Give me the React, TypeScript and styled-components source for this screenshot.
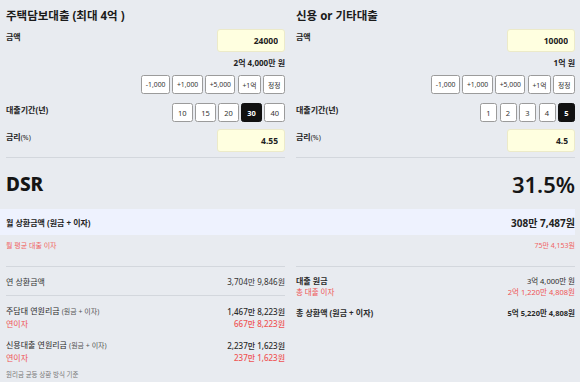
import React, { useState } from "react";
import styled, { createGlobalStyle } from "styled-components";

const Global = createGlobalStyle`
  html, body { margin: 0; padding: 0; background: #e8ebf0; }
  body { font-family: "Noto Sans", "Noto Sans CJK KR", sans-serif; color: #222; }
  * { box-sizing: border-box; }
`;

const Page = styled.div`
  width: 580px;
  height: 382px;
  overflow: hidden;
  padding: 0 5px 0 6px;
`;

const TwoCols = styled.div`
  display: grid;
  grid-template-columns: 1fr 1fr;
  column-gap: 11px;
`;

const Column = styled.section`
  display: flex;
  flex-direction: column;
  border-bottom: 1px solid #d3d7dd;
  padding-bottom: 5px;
`;

const Title = styled.h2`
  margin: 9px 0 0;
  font-size: 11.5px;
  line-height: 14px;
  font-weight: 700;
  color: #1a1a1a;
`;

const FieldRow = styled.div<{ $mt: number }>`
  display: flex;
  justify-content: space-between;
  align-items: flex-start;
  margin-top: ${(p) => p.$mt}px;
`;

const Label = styled.span<{ $pt?: number }>`
  font-size: 8px;
  line-height: 12px;
  font-weight: 700;
  padding-top: ${(p) => p.$pt ?? 2}px;
  color: #222;
  small { font-size: 7px; font-weight: 400; }
`;

const NumInput = styled.input`
  width: 68px;
  height: 23px;
  border: 1px solid #eceac9;
  border-radius: 3px;
  background: #ffffe0;
  text-align: right;
  padding: 0 6px 0 0;
  font-family: "Noto Sans", "Noto Sans CJK KR", sans-serif;
  font-size: 8.5px;
  font-weight: 700;
  color: #222;
  outline: none;
`;

const AmountText = styled.div`
  margin-top: 5px;
  text-align: right;
  font-size: 8px;
  line-height: 12px;
  font-weight: 700;
`;

const ButtonRow = styled.div<{ $mt?: number }>`
  display: flex;
  justify-content: flex-end;
  gap: 2.5px;
  margin-top: ${(p) => p.$mt ?? 0}px;
`;

const QuickBtn = styled.button`
  height: 19px;
  padding: 0 3.5px;
  background: #fff;
  border: 1px solid #9b9b9b;
  border-radius: 2.5px;
  font-family: "Noto Sans", "Noto Sans CJK KR", sans-serif;
  font-size: 6.8px;
  color: #333;
  cursor: pointer;
`;

const PeriodBtn = styled.button<{ $active: boolean }>`
  height: 19px;
  min-width: 17px;
  padding: 0 5px;
  background: ${(p) => (p.$active ? "#111" : "#fff")};
  color: ${(p) => (p.$active ? "#fff" : "#333")};
  border: 1px solid ${(p) => (p.$active ? "#111" : "#9b9b9b")};
  border-radius: 2.5px;
  font-family: "Noto Sans", "Noto Sans CJK KR", sans-serif;
  font-size: 7.5px;
  font-weight: ${(p) => (p.$active ? 700 : 400)};
  cursor: pointer;
`;

const DsrHeader = styled.div`
  height: 51px;
  display: flex;
  justify-content: space-between;
  align-items: center;
`;

const DsrLabel = styled.div`
  font-size: 19px;
  font-weight: 800;
  color: #151515;
`;

const DsrValue = styled.div`
  font-size: 22px;
  font-weight: 600;
  color: #151515;
`;

const Band = styled.div`
  height: 26px;
  margin-left: -6px;
  padding-left: 6px;
  background: #eef2fe;
  display: flex;
  justify-content: space-between;
  align-items: center;
`;

const BandLabel = styled.span`
  font-size: 8px;
  font-weight: 700;
`;

const BandValue = styled.span`
  font-size: 10px;
  font-weight: 700;
`;

const InterestRow = styled.div`
  height: 20px;
  display: flex;
  justify-content: space-between;
  align-items: center;
  color: #f06464;
  font-size: 7px;
  margin-bottom: 11px;
`;

const BottomCol = styled.div`
  border-top: 1px solid #d3d7dd;
  display: flex;
  flex-direction: column;
`;

const SummaryRow = styled.div`
  height: 29px;
  display: flex;
  justify-content: space-between;
  align-items: center;
  border-bottom: 1px solid #d3d7dd;
  font-size: 8px;
  color: #333;
`;

const Group = styled.div<{ $mt: number }>`
  margin-top: ${(p) => p.$mt}px;
  display: flex;
  flex-direction: column;
`;

const Line = styled.div<{ $tone?: "red"; $lh?: number; $size?: number; $bold?: boolean }>`
  display: flex;
  justify-content: space-between;
  align-items: center;
  line-height: ${(p) => p.$lh ?? 12}px;
  font-size: ${(p) => p.$size ?? 8}px;
  font-weight: ${(p) => (p.$bold ? 700 : 400)};
  color: ${(p) => (p.$tone === "red" ? "#ef5454" : "#2a2a2a")};
  small { font-size: 7px; color: #555; font-weight: 400; }
`;

const Value = styled.span<{ $size?: number; $weight?: number }>`
  font-size: ${(p) => p.$size ?? 8}px;
  font-weight: ${(p) => p.$weight ?? 500};
`;

const Footnote = styled.div`
  margin-top: 7px;
  font-size: 6.5px;
  line-height: 10px;
  color: #777;
`;

const quick = ["-1,000", "+1,000", "+5,000", "+1억", "정정"];

type LoanProps = {
  title: string;
  amount: string;
  amountText: string;
  periods: number[];
  active: number;
  rate: string;
};

function LoanColumn({ title, amount, amountText, periods, active, rate }: LoanProps) {
  const [sel, setSel] = useState(active);
  return (
    <Column>
      <Title>{title}</Title>
      <FieldRow $mt={6}>
        <Label>금액</Label>
        <NumInput defaultValue={amount} />
      </FieldRow>
      <AmountText>{amountText}</AmountText>
      <ButtonRow $mt={6}>
        {quick.map((q) => (
          <QuickBtn key={q}>{q}</QuickBtn>
        ))}
      </ButtonRow>
      <FieldRow $mt={9}>
        <Label $pt={1}>대출기간(년)</Label>
        <ButtonRow>
          {periods.map((p) => (
            <PeriodBtn key={p} $active={p === sel} onClick={() => setSel(p)}>
              {p}
            </PeriodBtn>
          ))}
        </ButtonRow>
      </FieldRow>
      <FieldRow $mt={7}>
        <Label>
          금리<small>(%)</small>
        </Label>
        <NumInput defaultValue={rate} />
      </FieldRow>
    </Column>
  );
}

export default function App() {
  return (
    <>
      <Global />
      <Page>
        <TwoCols>
          <LoanColumn
            title="주택담보대출 (최대 4억 )"
            amount="24000"
            amountText="2억 4,000만 원"
            periods={[10, 15, 20, 30, 40]}
            active={30}
            rate="4.55"
          />
          <LoanColumn
            title="신용 or 기타대출"
            amount="10000"
            amountText="1억 원"
            periods={[1, 2, 3, 4, 5]}
            active={5}
            rate="4.5"
          />
        </TwoCols>
        <DsrHeader>
          <DsrLabel>DSR</DsrLabel>
          <DsrValue>31.5%</DsrValue>
        </DsrHeader>
        <Band>
          <BandLabel>월 상환금액 (원금 + 이자)</BandLabel>
          <BandValue>308만 7,487원</BandValue>
        </Band>
        <InterestRow>
          <span>월 평균 대출 이자</span>
          <span>75만 4,153원</span>
        </InterestRow>
        <TwoCols>
          <BottomCol>
            <SummaryRow>
              <span>연 상환금액</span>
              <Value $weight={400}>3,704만 9,846원</Value>
            </SummaryRow>
            <Group $mt={9}>
              <Line>
                <span>
                  주담대 연원리금 <small>(원금 + 이자)</small>
                </span>
                <Value>1,467만 8,223원</Value>
              </Line>
              <Line $tone="red" $lh={11}>
                <span>연이자</span>
                <Value>667만 8,223원</Value>
              </Line>
            </Group>
            <Group $mt={10}>
              <Line>
                <span>
                  신용대출 연원리금 <small>(원금 + 이자)</small>
                </span>
                <Value>2,237만 1,623원</Value>
              </Line>
              <Line $tone="red" $lh={11}>
                <span>연이자</span>
                <Value>237만 1,623원</Value>
              </Line>
            </Group>
            <Footnote>원리금 균등 상환 방식 기준</Footnote>
          </BottomCol>
          <BottomCol>
            <Group $mt={8}>
              <Line $bold>
                <span>대출 원금</span>
                <Value $size={7.5} $weight={400}>3억 4,000만 원</Value>
              </Line>
              <Line $tone="red" $lh={11} $size={7.5}>
                <span>총 대출 이자</span>
                <Value $size={7.5} $weight={400}>2억 1,220만 4,808원</Value>
              </Line>
            </Group>
            <Group $mt={9}>
              <Line $bold>
                <span>총 상환액 (원금 + 이자)</span>
                <Value $size={7.5} $weight={700}>5억 5,220만 4,808원</Value>
              </Line>
            </Group>
          </BottomCol>
        </TwoCols>
      </Page>
    </>
  );
}
